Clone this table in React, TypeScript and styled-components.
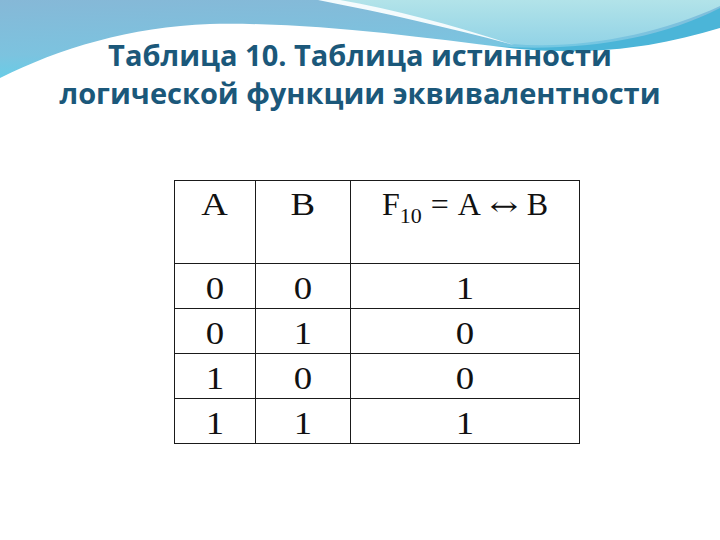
import styled, { createGlobalStyle } from "styled-components";

const GlobalStyle = createGlobalStyle`
    html, body {
        margin: 0;
        padding: 0;
        background: #ffffff;
    }
`;

const StyledSlide = styled.div`
    position: relative;
    width: 720px;
    height: 540px;
    overflow: hidden;
    background: #ffffff;
`;

const StyledWave = styled.svg`
    position: absolute;
    top: 0;
    left: 0;
    width: 720px;
    height: 130px;
`;

const StyledContent = styled.div`
    position: relative;
    display: flex;
    flex-direction: column;
    padding-top: 36px;
`;

const StyledTitle = styled.h1`
    margin: 0;
    text-align: center;
    font-family: "Open Sans", "Noto Sans", sans-serif;
    font-weight: 700;
    font-size: 29px;
    line-height: 38px;
    color: #1b587a;
`;

const StyledTable = styled.table`
    margin: 68px 0 0 174px;
    width: 406px;
    border-collapse: collapse;
    font-family: "Liberation Serif", "Times New Roman", serif;
    font-size: 32px;
    line-height: 38px;
    color: #111111;
`;

const StyledRow = styled.tr<{ $height: number }>`
    height: ${(p) => p.$height}px;
`;

const StyledCell = styled.td<{ $width?: number; $top: number }>`
    width: ${(p) => (p.$width ? `${p.$width}px` : "auto")};
    padding: ${(p) => p.$top}px 0 0;
    border: 1px solid #1a1a1a;
    text-align: center;
    vertical-align: top;
    box-sizing: border-box;
`;

const StyledGlyph = styled.span`
    display: inline-block;
    transform: scaleX(1.15);
`;

const StyledFormula = styled.span`
    display: inline-flex;
    align-items: baseline;
    gap: 9px;
`;

const StyledSub = styled.sub`
    font-size: 22px;
    line-height: 0;
    vertical-align: -8px;
`;

const StyledArrow = styled.span`
    display: inline-block;
    font-family: "DejaVu Serif", serif;
    font-size: 26px;
    transform: scaleX(1.3);
    margin: 0 3px;
`;

const rows = [
    ["0", "0", "1"],
    ["0", "1", "0"],
    ["1", "0", "0"],
    ["1", "1", "1"],
];

function App() {
    return (
        <>
            <GlobalStyle />
            <StyledSlide>
                <StyledWave viewBox="0 0 720 130">
                    <defs>
                        <linearGradient id="leftBlue" x1="0" y1="0" x2="0.25" y2="1">
                            <stop offset="0" stopColor="#86b8d7" />
                            <stop offset="0.55" stopColor="#7cc3df" />
                            <stop offset="1" stopColor="#55d6ee" />
                        </linearGradient>
                        <linearGradient id="rightCyan" x1="0" y1="0" x2="0" y2="1">
                            <stop offset="0" stopColor="#b2e3e9" />
                            <stop offset="1" stopColor="#92d3e6" />
                        </linearGradient>
                    </defs>
                    <rect x="0" y="0" width="720" height="95" fill="url(#leftBlue)" />
                    <path d="M330,0 C400,14 460,30 512,44 C580,50 660,34 720,6 L720,0 Z" fill="url(#rightCyan)" />
                    <path d="M318,0 C390,14 450,28 514,45 C450,24 395,10 340,0 Z" fill="#f4fbfd" />
                    <path d="M470,44 C560,54 650,44 720,8 L720,28 C650,52 560,58 480,47 Z" fill="#4bb5d8" />
                    <path d="M0,78 C60,48 130,27 210,24 C320,22 420,38 520,49 C600,56 660,46 720,28 L720,130 L0,130 Z" fill="#ffffff" />
                </StyledWave>
                <StyledContent>
                    <StyledTitle>
                        Таблица 10. Таблица истинности
                        <br />
                        логической функции эквивалентности
                    </StyledTitle>
                    <StyledTable>
                        <tbody>
                            <StyledRow $height={83}>
                                <StyledCell $width={81} $top={4}>
                                    <StyledGlyph>A</StyledGlyph>
                                </StyledCell>
                                <StyledCell $width={95} $top={4}>
                                    <StyledGlyph>B</StyledGlyph>
                                </StyledCell>
                                <StyledCell $top={4}>
                                    <StyledFormula>
                                        <span>
                                            F<StyledSub>10</StyledSub>
                                        </span>
                                        <span>=</span>
                                        <span>A</span>
                                        <StyledArrow>↔</StyledArrow>
                                        <span>B</span>
                                    </StyledFormula>
                                </StyledCell>
                            </StyledRow>
                            {rows.map((row, index) => (
                                <StyledRow key={index} $height={45}>
                                    {row.map((value, col) => (
                                        <StyledCell key={col} $top={5}>
                                            <StyledGlyph>{value}</StyledGlyph>
                                        </StyledCell>
                                    ))}
                                </StyledRow>
                            ))}
                        </tbody>
                    </StyledTable>
                </StyledContent>
            </StyledSlide>
        </>
    );
}

export default App;
